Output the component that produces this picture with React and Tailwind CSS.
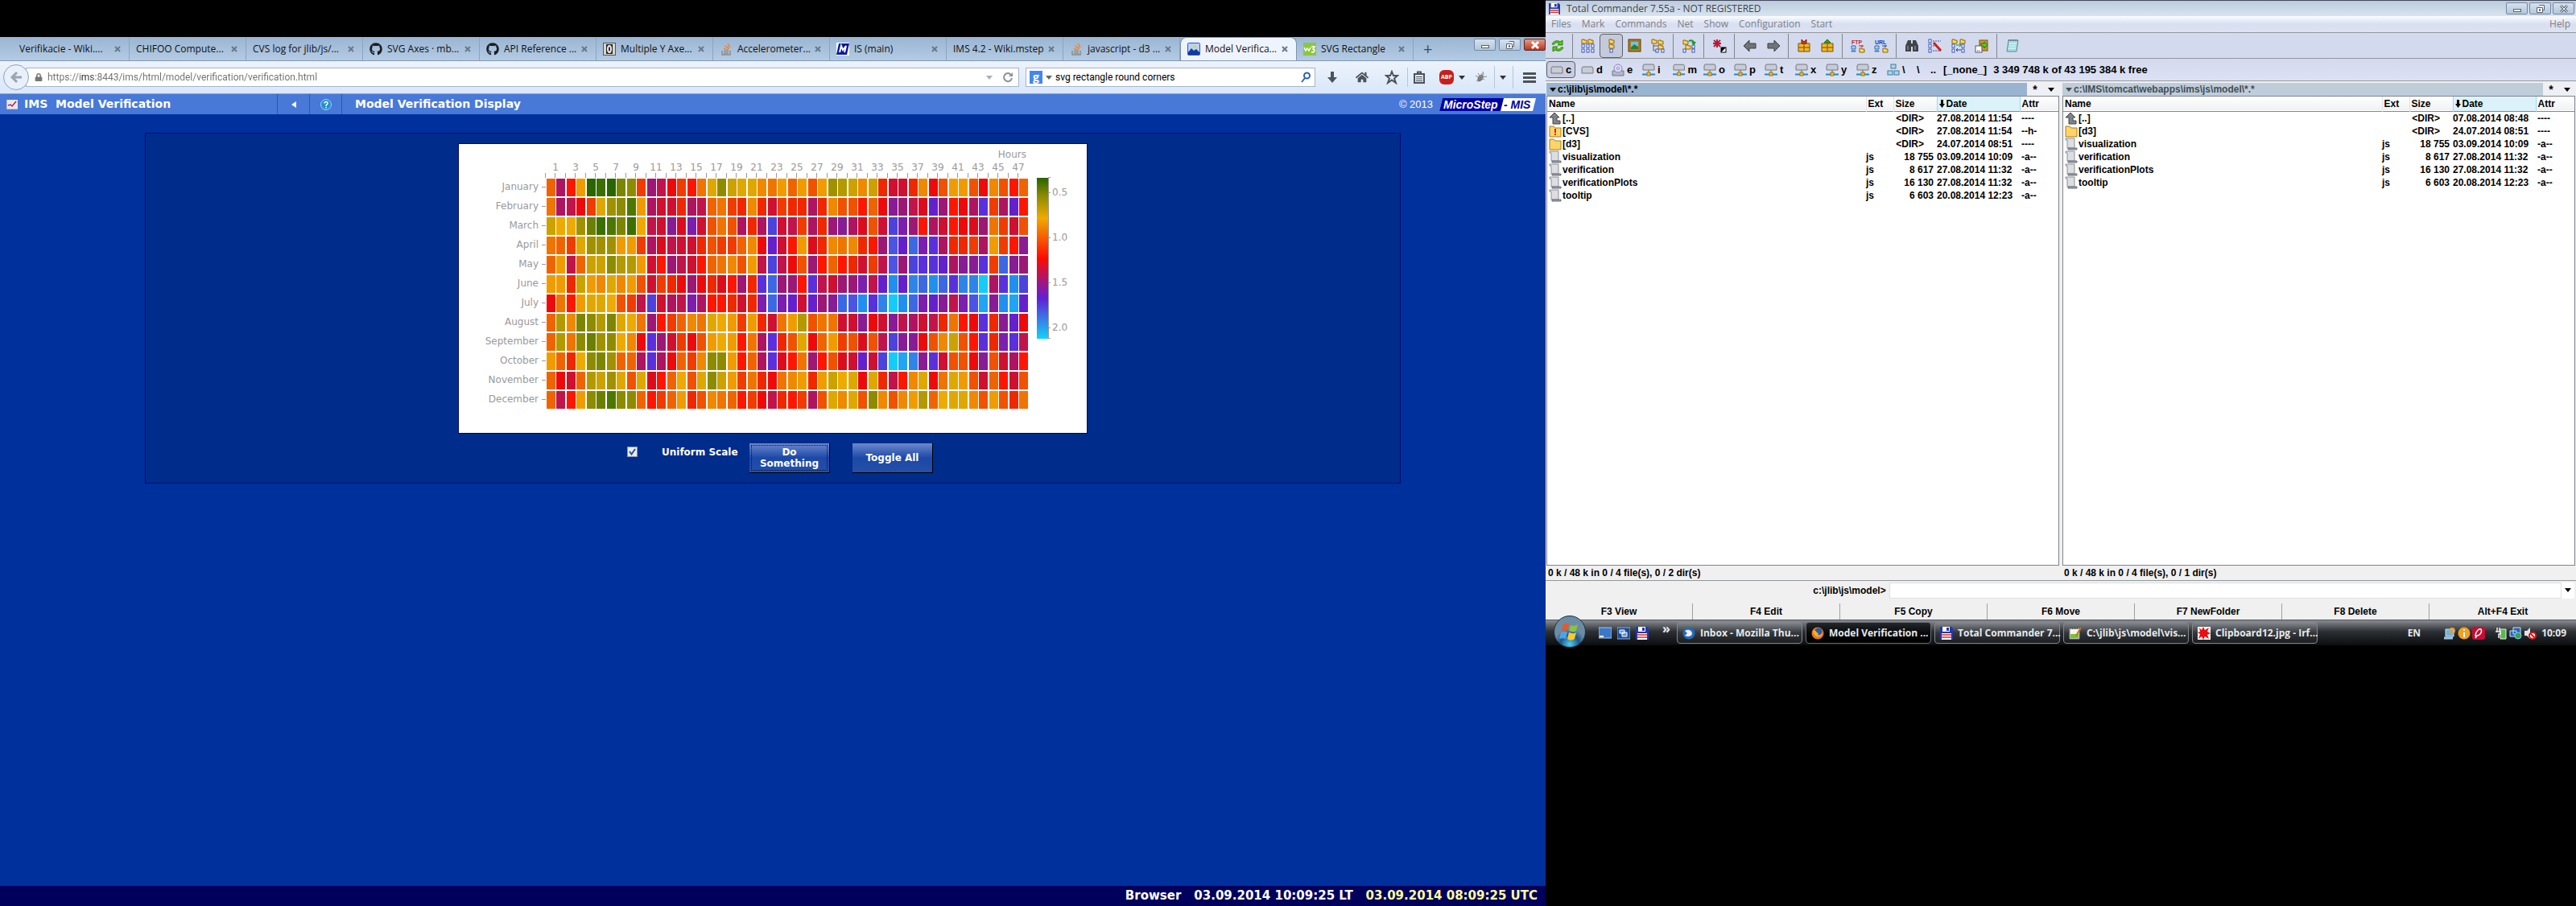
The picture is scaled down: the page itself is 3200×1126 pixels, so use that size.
import React from "react";
import { FaGithub, FaHome, FaLock } from "react-icons/fa";

const UI = "font-['Open_Sans','Noto_Sans',sans-serif]";
const VER = "font-['DejaVu_Sans',sans-serif]";
const TC = "font-['Liberation_Sans',sans-serif]";

/* ---------- heat map data: one letter per hour, darkest green to cyan ---------- */
const PALETTE = {
  0: "#2a6600", 1: "#3b7000", 2: "#4c7700", 3: "#6b8000", 4: "#7c8600", 5: "#8d8c00",
  6: "#a09100", 7: "#b39a00", 8: "#cba200", 9: "#dfa800", a: "#eeaa00", b: "#f09c00",
  c: "#f08800", d: "#f07400", e: "#f06400", f: "#f05200", g: "#f03c00", h: "#f02800",
  i: "#ff1600", j: "#ee0a0a", k: "#dc0c1c", l: "#d01030", m: "#c0144a", n: "#ae1460",
  o: "#9c1874", p: "#881c94", q: "#7c1eae", r: "#6420cc", s: "#5a30dc", t: "#4c42dc",
  u: "#4c54e4", v: "#3c68e4", w: "#2f84ea", x: "#2090f0", y: "#20a4f4", z: "#14ccf8",
};

const MONTHS = [
  ["January", "enib01045gomjgid95899cdbebfb678c8hllhcjfbbfjcfie"],
  ["February", "dnmjg9652bnllhnmedghchlghhnhcffiejpomkroijnsgnri"],
  ["March", "8aa631241amlpkqlfdfnhntlmgnhopnkfltqoinlijkodglf"],
  ["April", "deg9666bbgnkmllhfggecjrlibkhcdchiourvqsnhhgnbgip"],
  ["May", "ebme88577bliomliedcfbmtmjfoieihlgmuotssrnppsgvpo"],
  ["June", "bbh8bc9cbflghjojhkiohsvooismlooqmrxrwvxvswwznsxt"],
  ["July", "jdib99afgmtlnmqniihlhqvqrlropvuxswzxvqrpmquypxyr"],
  ["August", "e7c45749adoigecd9abgbhldb7fddllpjlpmnlmhdijshprj"],
  ["September", "e7d5365acjsolgjfbabidnshf9jebgfkfmtppjfc8fishqsm"],
  ["October", "beha546eensnjegc55bienskidoifklrltzywpslffjpflni"],
  ["November", "ejle7869f9kieaf958bgdhjdcbhb8a9j9hmic9jd9bfleilf"],
  ["December", "emib53255eigebhfcdeigjmhignf9c9f5cfcb7ea99cfbfhd"],
];

function HeatMap() {
  const cellX = (i) => 109 + Math.floor(i * 12.5);
  return (
    <svg viewBox="0 0 780 359" className={`block w-full ${VER} text-[12px]`} role="img" aria-label="Hourly verification by month">
      <defs>
        <linearGradient id="scale" x1="0" y1="0" x2="0" y2="1">
          <stop offset="0" stopColor="#286400" />
          <stop offset="0.11" stopColor="#8a8a00" />
          <stop offset="0.25" stopColor="#f0aa00" />
          <stop offset="0.5" stopColor="#ff0a00" />
          <stop offset="0.75" stopColor="#6020d8" />
          <stop offset="1" stopColor="#10d4f8" />
        </linearGradient>
      </defs>
      <g fill="#999">
        <text x="705" y="17" textAnchor="end">Hours</text>
        {Array.from({ length: 48 }, (_, i) => (
          <g key={i}>
            <rect x={cellX(i) - 2} y="36" width="1" height="6" />
            {i % 2 === 1 && <text x={cellX(i) - 1} y="33" textAnchor="middle">{i}</text>}
          </g>
        ))}
        {MONTHS.map(([name], r) => (
          <g key={name}>
            <text x="99" y={57 + r * 24} textAnchor="end">{name}</text>
            <rect x="103" y={53 + r * 24} width="5" height="1" />
          </g>
        ))}
      </g>
      {MONTHS.map(([name, hours], r) =>
        hours.split("").map((v, i) => (
          <rect key={name + i} x={cellX(i)} y={43 + r * 24} width="11" height="22" fill={PALETTE[v]} />
        ))
      )}
      <rect x="718" y="42" width="14" height="200" fill="url(#scale)" />
      <path d="M735 41.500H732.500V241.500H735M732 60.500H735M732 116.500H735M732 172.500H735M732 228.500H735" fill="none" stroke="#999" />
      <g fill="#999">
        <text x="737" y="64">0.5</text>
        <text x="737" y="120">1.0</text>
        <text x="737" y="176">1.5</text>
        <text x="737" y="232">2.0</text>
      </g>
    </svg>
  );
}

/* ---------- browser ---------- */
const ZeroIcon = () => (
  <svg viewBox="0 0 16 16" className="size-4 shrink-0"><rect width="16" height="16" fill="#555" /><rect x="1" y="1" width="14" height="14" fill="#d8d4cc" /><rect x="4" y="2" width="8" height="12" fill="#222" /><ellipse cx="8" cy="8" rx="2" ry="4" fill="none" stroke="#eee" strokeWidth="2" /></svg>
);
const MisIcon = () => (
  <svg viewBox="0 0 16 16" className="size-4 shrink-0"><path d="M0 0H16V16H0z" fill="#fff" /><path d="M3 1H16L13 15H0z" fill="#0a1a9c" /><path d="M4 12L6 4L8 9L12 4L10 12" fill="none" stroke="#fff" strokeWidth="2" /></svg>
);
const SceneIcon = () => (
  <svg viewBox="0 0 16 16" className="size-4 shrink-0"><rect x=".5" y=".5" width="15" height="15" rx="1" fill="#b7d3fb" stroke="#2b57b5" /><path d="M1 12L5 7L8 10L11 8L15 12V15H1z" fill="#123c9c" /><circle cx="9" cy="5" r="2" fill="#ffc93a" /></svg>
);
const W3Icon = () => (
  <svg viewBox="0 0 16 16" className="size-4 shrink-0"><rect width="16" height="16" fill="#8cc63f" /><path d="M1 6L3 10L5 7L7 10L9 6M10 5H14L12 8C15 8 15 12 10 12" fill="none" stroke="#fff" strokeWidth="1.500" /></svg>
);
const Git = () => <FaGithub className="size-4 shrink-0 text-[#1b1f23]" />;
const Stack = () => (
  <svg viewBox="0 0 16 16" className="size-4 shrink-0"><path d="M3 10V15H13V10M5 13H11M5 10.500H11" fill="none" stroke="#8c8c8c" strokeWidth="1.500" /><path d="M5 7.500L11 9M6.500 4L12 7.500M10 1L13 6" fill="none" stroke="#e88a3c" strokeWidth="1.500" /></svg>
);

const TABS = [
  ["Verifikacie - Wiki....", null], ["CHIFOO Compute...", null], ["CVS log for jlib/js/...", null],
  ["SVG Axes · mb...", Git], ["API Reference ...", Git], ["Multiple Y Axe...", ZeroIcon],
  ["Accelerometer...", Stack], ["IS (main)", MisIcon], ["IMS 4.2 - Wiki.mstep", null],
  ["javascript - d3 ...", Stack], ["Model Verifica...", SceneIcon], ["SVG Rectangle", W3Icon],
];

function Tab({ label, Icon, active, first }) {
  return (
    <button className={`flex h-full shrink-0 items-center pr-2.5 text-[#111] ${first ? "w-[161px] pl-6" : "w-[145px] pl-2"} ${active ? "rounded-t-lg border border-b-0 border-[#7d93ad] bg-[#eef4fd]" : "border-r border-[#8ca4be]"}`}>
      {Icon && <Icon />}
      <span className={`whitespace-nowrap ${Icon ? "ml-1.5" : ""}`}>{label}</span>
      <svg viewBox="0 0 8 8" className="ml-auto size-2 shrink-0"><path d="M1 1L7 7M7 1L1 7" stroke="#68798c" strokeWidth="2" /></svg>
    </button>
  );
}

function WinButton({ kind, close, label }) {
  return (
    <button aria-label={label} className={`flex h-[15px] w-[27px] items-center justify-center rounded-xs border ${close ? "border-[#5c2a2a] bg-linear-to-b from-[#e09a88] to-[#b8321c] text-white" : "border-[#7488a0] bg-linear-to-b from-[#d5e1ef] to-[#b4c7dc] text-[#55606c]"}`}>
      <svg viewBox="0 0 14 12" className="h-3 w-3.5" fill="#fff" stroke="currentColor">
        {kind === "min" && <rect x="2.500" y="6.500" width="9" height="3" />}
        {kind === "max" && <path d="M5.500 1.500H11.500V7.500H9.500M2.500 4.500H9.500V10.500H2.500zM5.500 6.500H6.500V8.500H5.500z" />}
        {kind === "x" && <path d="M3 2L11 10M11 2L3 10" strokeWidth="3" stroke={close ? "#fff" : "#5c6672"} />}
        {kind === "x" && !close && <path d="M3 2L11 10M11 2L3 10" strokeWidth="1" stroke="#fff" />}
      </svg>
    </button>
  );
}

const Caret = ({ className = "" }) => (
  <svg viewBox="0 0 8 5" className={`h-[5px] w-2 ${className}`}><path d="M0 0H8L4 5z" fill="currentColor" /></svg>
);

function Browser() {
  return (
    <section className="flex min-h-screen min-w-0 flex-[3] flex-col bg-[#00309c]">
      <div className="h-[46px] bg-black" />
      <div className={`flex h-[30px] border-b border-[#8199b4] bg-linear-to-b from-[#9ab5d3] to-[#b4cbe3] text-[12px] ${UI}`}>
        {TABS.map(([label, Icon], i) => <Tab key={label} label={label} Icon={Icon} active={i === 10} first={i === 0} />)}
        <button aria-label="New tab" className="ml-3 text-[20px] leading-7 text-[#3c4a5a]">+</button>
        <div className="ml-auto flex gap-1 pt-0.5">
          <WinButton kind="min" label="Minimize" />
          <WinButton kind="max" label="Restore" />
          <WinButton kind="x" close label="Close" />
        </div>
      </div>
      <div className={`flex h-[41px] items-center border-b border-[#90a4bc] bg-linear-to-b from-[#edf3fc] to-[#d9e7f9] text-[12px] text-[#4c525a] ${UI}`}>
        <button aria-label="Back" className="z-10 ml-1 flex size-8 items-center justify-center rounded-full border border-[#8ea3bd] bg-[#e9f0f9]">
          <svg viewBox="0 0 16 16" className="size-4"><path d="M9 2L3 8L9 14M3 8H15" fill="none" stroke="#9aa5b2" strokeWidth="3" /></svg>
        </button>
        <div className="-ml-1 flex h-6 flex-1 items-center gap-1.5 border border-[#a4b5c9] bg-white pl-2.5">
          <FaLock className="size-2.5 text-[#777]" />
          <input aria-label="Address" readOnly className="min-w-0 flex-1 bg-linear-to-r from-[#707070] from-[42px] via-[#111] via-[42px] to-[#707070] to-[62px] bg-clip-text font-[Roboto,sans-serif] text-[12px] text-transparent outline-none" value="https://ims:8443/ims/html/model/verification/verification.html" />
          <Caret className="text-[#a8b0b8]" />
          <svg viewBox="0 0 14 14" className="mr-1.5 ml-1.5 size-3.5"><path d="M11 4A5 5 0 1 0 12 8" fill="none" stroke="#8a929c" strokeWidth="2" /><path d="M13 1V6H8z" fill="#8a929c" /></svg>
        </div>
        <div className="ml-2 flex h-6 w-[360px] items-center border border-[#a4b5c9] bg-white pl-1">
          <span className="flex size-4 items-center justify-center bg-[#4486f0] text-[14px] leading-4 font-bold text-white">g</span>
          <Caret className="ml-1 text-[#666]" />
          <input aria-label="Search" className="ml-1 min-w-0 flex-1 font-[Roboto,sans-serif] text-[12px] text-black outline-none" defaultValue="svg rectangle round corners" />
          <svg viewBox="0 0 14 14" className="mr-1 size-3.5"><circle cx="8.500" cy="5" r="3.500" fill="none" stroke="#2e62b0" strokeWidth="2" /><path d="M6 8L2 13" stroke="#2e62b0" strokeWidth="2" /></svg>
        </div>
        <div className="flex items-center pl-3.5">
          <button aria-label="Downloads" className="w-9"><svg viewBox="0 0 14 14" className="size-3.5"><path d="M5 0H9V7H13L7 14L1 7H5z" fill="#4c525a" /></svg></button>
          <button aria-label="Home" className="w-9"><FaHome className="size-4" /></button>
          <button aria-label="Bookmark" className="w-7"><svg viewBox="0 0 18 18" className="size-[18px]"><path d="M9 2L11 7L16 7L12 10.500L14 16L9 12.500L4 16L6 10.500L2 7L7 7z" fill="none" stroke="#4c525a" strokeWidth="2" /></svg></button>
          <button aria-label="Bookmarks list" className="flex h-6 w-10 items-center border-l border-[#b8c6d8] pl-1.5"><svg viewBox="0 0 16 16" className="size-4"><path d="M2 4H14V15H2zM6 1.500H10V4H6z" fill="none" stroke="#4c525a" strokeWidth="2" /><path d="M4 7.500H12M4 10H12M4 12.500H12" stroke="#4c525a" /></svg></button>
          <button className="flex w-11 items-center gap-1.5"><span className="flex size-[18px] items-center justify-center rounded-md bg-[#c7201c] text-[7px] font-bold text-white">ABP</span><Caret className="text-[#333]" /></button>
          <button aria-label="Firebug" className="w-6"><svg viewBox="0 0 16 16" className="size-4"><ellipse cx="7" cy="9" rx="3" ry="5" fill="#777" transform="rotate(35 7 9)" /><path d="M1 6L7 9L2 13M9 3L8 8L15 7M10 1L11 5M4 3L7 8M12 11L8 9" stroke="#888" fill="none" /></svg></button>
          <button aria-label="Firebug menu" className="flex h-7 w-6 items-center border-x border-[#b8c6d8] pl-1.5"><Caret className="text-[#333]" /></button>
          <button aria-label="Menu" className="mr-3 ml-3 flex w-4 flex-col gap-0.5"><i className="h-[3px] bg-[#4c525a]" /><i className="h-[3px] bg-[#4c525a]" /><i className="h-[3px] bg-[#4c525a]" /></button>
        </div>
      </div>
      <header className={`flex h-[25px] items-center bg-[#4878d8] text-[14px] font-bold text-white ${VER}`}>
        <div className="flex h-full w-[345px] items-center gap-2 border-r border-[#2c58b8] pl-2">
          <svg viewBox="0 0 14 12" className="h-3 w-3.5"><rect width="14" height="12" fill="#e4e8f0" /><path d="M2 7L5 6L7 8L12 2" fill="none" stroke="#c02030" strokeWidth="1.500" /><path d="M0 0V12H14" fill="none" stroke="#99a" /></svg>
          <h1 className="whitespace-pre">IMS  Model Verification</h1>
        </div>
        <button aria-label="Collapse" className="flex h-full w-10 items-center justify-center border-r border-[#2c58b8]"><svg viewBox="0 0 6 8" className="h-2 w-1.5"><path d="M6 0V8L0 4z" fill="#fff" /></svg></button>
        <button aria-label="Help" className="flex h-full w-10 items-center justify-center border-r border-[#2c58b8]"><svg viewBox="0 0 14 14" className="size-3.5"><circle cx="7" cy="7" r="6.500" fill="#2490d0" stroke="#9cd4f4" /><path d="M5 5.500C5 2.500 9.500 3 9 5.500C8.500 7 7 7 7 9M7 10V11.500" stroke="#fff" strokeWidth="1.500" fill="none" /></svg></button>
        <h2 className="pl-4">Model Verification Display</h2>
        <span className={`ml-auto text-[13px] font-normal ${TC}`}>© 2013</span>
        <svg viewBox="0 0 120 16" className={`mr-3 ml-2 h-4 w-[120px] ${TC} text-[14px] font-bold italic`}>
          <path d="M4 0H120L116 16H0z" fill="#fff" /><path d="M4 0H80L76 16H0z" fill="#0000a0" />
          <text x="5" y="13" fill="#fff">MicroStep</text><text x="80" y="13" fill="#0000a0">- MIS</text>
        </svg>
      </header>
      <main className="mx-[180px] mt-[23px] border border-[#000c70] bg-[#002c8c]">
        <div className="mx-auto mt-[13px] w-full max-w-[780px] bg-white shadow-[0_0_0_1px_#000860]"><HeatMap /></div>
        <div className={`mt-[13px] flex items-start justify-center pb-3 pl-[18px] text-[12px] leading-[14px] font-bold text-white ${VER}`}>
          <label className="flex w-[152px] items-start">
            <input type="checkbox" defaultChecked className="mt-1 size-[13px] appearance-none border border-[#8894a8] bg-[#e8ecf4]" />
            <svg viewBox="0 0 13 13" className="pointer-events-none mt-1 -ml-[13px] size-[13px]"><path d="M3 6L5.500 9.500L10 3" fill="none" stroke="#30508c" strokeWidth="2" /></svg>
            <span className="mt-1 ml-[30px] whitespace-nowrap">Uniform Scale</span>
          </label>
          <button className="h-[37px] w-[100px] border-r border-b border-black bg-linear-to-b from-[#6c88cc] via-[#1c48a8] to-[#2450a8] p-0.5"><span className="flex h-full items-center justify-center border border-dotted border-[#001040]">Do<br />Something</span></button>
          <button className="ml-7 h-[37px] w-[100px] border-r border-b border-black bg-linear-to-b from-[#6c88cc] via-[#1c48a8] to-[#2450a8]">Toggle All</button>
        </div>
      </main>
      <footer className={`mt-auto flex h-[25px] items-center justify-end gap-4 bg-[#00005c] pr-2.5 text-[15px] font-bold text-white ${VER}`}>
        <span>Browser</span><span>03.09.2014 10:09:25 LT</span><span className="text-[#ffff98]">03.09.2014 08:09:25 UTC</span>
      </footer>
    </section>
  );
}

/* ---------- file manager icons ---------- */
const Floppy = ({ className = "size-4 shrink-0" }) => (
  <svg viewBox="0 0 16 16" className={className}><path d="M0 0H14L16 2V16H0z" fill="#2238a8" /><rect x="3" width="9" height="6" fill="#fff" /><rect x="8" y="1" width="3" height="4" fill="#2238a8" /><rect x="2" y="8" width="12" height="8" fill="#fff" /><path d="M2 10H14M2 13H14" stroke="#e02828" strokeWidth="1.500" /></svg>
);
const Folder = ({ x, y }) => <path d={`M${x} ${y}h3v1h3v4h-6z`} fill="#ffd860" stroke="#8c6408" strokeWidth="1" />;
const Doc = ({ x, y }) => <rect x={x} y={y} width="3" height="4" fill="#fff" stroke="#3454b4" />;
const Tool = ({ children }) => <svg viewBox="0 0 18 18" className="size-[18px]">{children}</svg>;
const Gift = ({ children }) => (
  <Tool><path d="M2 6H16V16H2z" fill="#f0b828" stroke="#7c4c08" /><path d="M9 6V16M2 11H16" stroke="#7c4c08" />{children}</Tool>
);
const Pc = ({ x, y }) => <path d={`M${x} ${y}h5v4h-5zM${x} ${y + 6}h5v1h-5z`} fill="#9cd4f0" stroke="#3868b8" />;

const TOOLS = [
  ["Refresh", <Tool><path d="M2 7C4 2 10 2 12 4L15 2V8H9L11 6C8 4 6 5 5 7z" fill="#58c818" stroke="#2c8408" /><path d="M16 11C14 16 8 16 6 14L3 16V10H9L7 12C10 14 12 13 13 11z" fill="#58c818" stroke="#2c8408" /></Tool>],
  null,
  ["Brief", <Tool><Folder x={1} y={1} /><Folder x={9} y={1} />{[7, 13].map((y) => [1, 7, 13].map((x) => <Doc key={x + "-" + y} x={x} y={y} />))}</Tool>],
  ["Full", <Tool><Folder x={6} y={1} /><Folder x={6} y={7} /><Doc x={7} y={13} /></Tool>, true],
  ["Thumbnails", <Tool><rect x="1" y="1" width="15" height="15" fill="#b07c20" stroke="#5c3c08" /><rect x="4" y="4" width="9" height="9" fill="#6cc4e8" /><path d="M4 11L8 7L13 10V13H4z" fill="#208438" /></Tool>],
  ["Tree", <Tool><Folder x={1} y={1} /><Folder x={9} y={2} /><path d="M3 7V15H9M3 9H9" stroke="#557" fill="none" /><Folder x={9} y={8} /><Doc x={6} y={13} /><Doc x={13} y={13} /></Tool>],
  null,
  ["Same in target", <Tool><Folder x={2} y={2} /><Folder x={5} y={8} /><Doc x={2} y={13} /><Doc x={13} y={8} /><Doc x={13} y={13} /><path d="M9 3C13 1 15 3 15 6M13 4L15 7L17 4" stroke="#189828" strokeWidth="2" fill="none" /></Tool>],
  null,
  ["Invert", <Tool><path d="M6 1V11M1 6H11M2 2L10 10M10 2L2 10" stroke="#b81838" strokeWidth="2" /><rect x="11" y="11" width="6" height="6" fill="#fff" stroke="#000" /><path d="M11 11H17L11 17z" /></Tool>],
  null,
  ["Back", <Tool><path d="M8 2L1 9L8 16V12H16V6H8z" fill="#707478" stroke="#3c4044" /></Tool>],
  ["Forward", <Tool><path d="M10 2L17 9L10 16V12H2V6H10z" fill="#707478" stroke="#3c4044" /></Tool>],
  null,
  ["Pack", <Gift><path d="M6 1L9 4L12 1V6H6z" fill="#e03818" stroke="#8c1808" /></Gift>],
  ["Unpack", <Gift><path d="M9 1L13 5H5z" fill="#38a818" stroke="#186808" /></Gift>],
  null,
  ["FTP", <Tool><text x="1" y="7" fontSize="7" fontWeight="bold" fill="#b82838">FTP</text><Pc x={1} y={9} /><Folder x={11} y={12} /><path d="M10 9H16M14 8V11" stroke="#c02020" /></Tool>],
  ["URL", <Tool><text x="1" y="7" fontSize="7" fontWeight="bold" fill="#1838b0">URL</text><Pc x={1} y={9} /><Folder x={11} y={12} /><path d="M10 9H16M14 8V11" stroke="#2040b0" /></Tool>],
  null,
  ["Search", <Tool><path d="M4 2H8V16H1V9zM10 2H14L17 9V16H10zM8 6H10V10H8z" fill="#404448" /><path d="M4 9V14M13 9V14" stroke="#aab" /></Tool>],
  ["Multi-rename", <Tool><Doc x={1} y={1} /><Doc x={1} y={7} /><Doc x={1} y={13} /><path d="M6 3H16M6 9H8M6 15H16" stroke="#3454b4" strokeDasharray="2 1" /><path d="M7 5L16 15" stroke="#d02018" strokeWidth="3" /></Tool>],
  ["Synchronize", <Tool><Folder x={1} y={1} /><Folder x={11} y={1} /><Doc x={1} y={7} /><Doc x={13} y={7} /><Doc x={1} y={13} /><Doc x={13} y={13} /><path d="M6 8H12M10 6L12 8L10 10" stroke="#189828" fill="none" /><path d="M6 14H12M8 12L6 14L8 16" stroke="#2040b0" fill="none" /></Tool>],
  ["Copy names", <Tool><rect x="6" y="2" width="10" height="13" fill="#c89838" stroke="#7c5408" /><path d="M8 6H12V4L16 8L12 12V10H8z" fill="#68c020" stroke="#287808" /><rect x="1" y="9" width="8" height="8" fill="#fff" stroke="#557" /><path d="M3 15H7" stroke="#223" strokeDasharray="1 1" /></Tool>],
  null,
  ["Notepad", <Tool><path d="M4 2H16L14 16H2z" fill="#a4dcdc" stroke="#5c8c94" /><path d="M5 6H14M5 9H13M4 12H13" stroke="#e4ffff" /><path d="M4 2H16" stroke="#667" strokeWidth="2" strokeDasharray="1 1" /></Tool>],
];

const Drive = ({ kind }) => (
  <svg viewBox="0 0 16 16" className="size-4">
    {kind === "cd" && <><path d="M1 9H15V15H1z" fill="#b4b8c4" stroke="#747884" /><circle cx="8" cy="6" r="5" fill="#dcd8f8" stroke="#8884c4" /><circle cx="8" cy="6" r="1.500" fill="#fff" stroke="#8884c4" /></>}
    {kind === "hd" && <path d="M2 4H14L15 6V12H1V6z" fill="#c8ccd4" stroke="#747884" />}
    {kind === "net" && <><path d="M2 1H14L15 3V8H1V3z" fill="#c8ccd4" stroke="#747884" /><path d="M0 13.500H16" stroke="#2088c8" strokeWidth="2" /><path d="M8 8V12" stroke="#667" /><rect x="6" y="11" width="4" height="4" fill="#f0c030" stroke="#a07808" /></>}
    {kind === "pcs" && <><rect x="5" y="1" width="6" height="5" fill="#a4d8f0" stroke="#447898" /><rect x="1" y="9" width="6" height="5" fill="#a4d8f0" stroke="#447898" /><rect x="9" y="9" width="6" height="5" fill="#a4d8f0" stroke="#447898" /></>}
  </svg>
);
const DRIVES = [["c", "hd"], ["d", "hd"], ["e", "cd"], ["i", "net"], ["m", "net"], ["o", "net"], ["p", "net"], ["t", "net"], ["x", "net"], ["y", "net"], ["z", "net"], ["\\", "pcs"]];

const FileIcon = ({ kind }) => (
  <svg viewBox="0 0 16 16" className="size-4 shrink-0">
    {kind === "up" && <path d="M7 1L13 7H10V11H14V15H5V7H1z" fill="#808488" stroke="#44484c" />}
    {(kind === "dir" || kind === "hidden") && <path d="M1 2H6L8 4H15V15H1z" fill="#fcd468" stroke="#a87c20" />}
    {kind === "hidden" && <path d="M8 5V10M8 11V13" stroke="#d82018" strokeWidth="2" />}
    {kind === "js" && <><path d="M1 1H12V13H3V3H1z" fill="#dcdee2" stroke="#8c9096" /><path d="M4 13H15V15H4z" fill="#a4a8ae" stroke="#6c7076" /></>}
  </svg>
);

const FILES = [
  ["js", "visualization", "js", "18 755", "03.09.2014 10:09", "-a--"],
  ["js", "verification", "js", "8 617", "27.08.2014 11:32", "-a--"],
  ["js", "verificationPlots", "js", "16 130", "27.08.2014 11:32", "-a--"],
  ["js", "tooltip", "js", "6 603", "20.08.2014 12:23", "-a--"],
];
const LEFT = [
  ["up", "[..]", "", "<DIR>", "27.08.2014 11:54", "----"],
  ["hidden", "[CVS]", "", "<DIR>", "27.08.2014 11:54", "--h-"],
  ["dir", "[d3]", "", "<DIR>", "24.07.2014 08:51", "----"],
  ...FILES,
];
const RIGHT = [
  ["up", "[..]", "", "<DIR>", "07.08.2014 08:48", "----"],
  ["dir", "[d3]", "", "<DIR>", "24.07.2014 08:51", "----"],
  ...FILES,
];

function Pane({ path, active, rows, status }) {
  return (
    <div className="flex min-w-0 flex-1 flex-col">
      <div className="flex h-4 items-center bg-[#eef0f4] leading-4">
        <button className={`flex h-full min-w-0 flex-1 items-center gap-0.5 pl-1 ${active ? "bg-[#99b4d1] text-black" : "bg-[#bfcddb] text-[#434e54]"}`}><Caret />{path}</button>
        <button aria-label="Favourites" className="w-5 text-[14px] leading-4">*</button>
        <button aria-label="History" className="flex w-5 justify-center"><Caret /></button>
      </div>
      <div className="h-[584px] border border-[#80848c] bg-white">
        <table className="w-full table-fixed border-collapse">
          <colgroup><col /><col className="w-[34px]" /><col className="w-[54px]" /><col className="w-[103px]" /><col className="w-12" /></colgroup>
          <thead>
            <tr className="h-[18px] border-b border-[#84888c] bg-linear-to-b from-white to-[#f0f1f2] text-left leading-4">
              <th className="pl-0.5">Name</th>
              <th className="border-l border-[#e0e2e6] pl-0.5">Ext</th>
              <th className="border-l border-[#e0e2e6] pl-0.5">Size</th>
              <th className="border-x border-[#96d9f9] bg-[#dcf2fb]"><span className="flex items-center gap-0.5 pl-0.5"><svg viewBox="0 0 7 10" className="h-2.5 w-[7px]"><path d="M2 0H5V5H7L3.500 10L0 5H2z" /></svg>Date</span></th>
              <th className="pl-0.5">Attr</th>
            </tr>
          </thead>
          <tbody>
            {rows.map(([kind, name, ext, size, date, attr]) => (
              <tr key={name} className="h-4 leading-4">
                <td><span className="flex items-center gap-px pl-0.5"><FileIcon kind={kind} />{name}</span></td>
                <td>{ext}</td>
                <td className={`text-right ${ext ? "pr-1" : "pr-4"}`}>{size}</td>
                <td className="whitespace-nowrap">{date}</td>
                <td className="pl-0.5">{attr}</td>
              </tr>
            ))}
          </tbody>
        </table>
      </div>
      <div className="flex h-[18px] items-center pl-0.5">{status}</div>
    </div>
  );
}

const Sep = () => <span className="mx-1 h-[30px] w-px bg-[#80848c]" />;

const FirefoxIcon = () => <svg viewBox="0 0 16 16" className="size-4 shrink-0"><circle cx="8" cy="8" r="7.500" fill="#e87818" /><circle cx="9" cy="6" r="4.500" fill="#2858b0" /><path d="M2 5C6 3 6 8 9 8C6 12 13 11 13 7C15 14 3 15 2 5" fill="#f8b020" /></svg>;
const BirdIcon = () => <svg viewBox="0 0 16 16" className="size-4 shrink-0"><circle cx="8" cy="8" r="7.500" fill="#2868b8" /><path d="M3 5C8 2 12 5 12 9C11 12 7 13 3 11L6 8z" fill="#e8f0f8" /></svg>;
const NoteIcon = () => <svg viewBox="0 0 16 16" className="size-4 shrink-0"><path d="M1 2H13V15H1z" fill="#f4f4e8" stroke="#888" /><path d="M2 9H12V14H2z" fill="#74c42c" /><path d="M15 1L9 11" stroke="#c07818" strokeWidth="2" /><path d="M2 2H12" stroke="#444" strokeDasharray="1 1" strokeWidth="2" /></svg>;
const IrfanIcon = () => <svg viewBox="0 0 16 16" className="size-4 shrink-0"><rect width="16" height="16" fill="#fff" /><path d="M2 1L5 4L7 0L9 4L14 1L12 6L16 8L12 10L14 15L9 12L7 16L5 12L1 15L3 9L0 7L3 6z" fill="#e81010" /></svg>;

const TASKS = [
  ["Inbox - Mozilla Thu...", BirdIcon], ["Model Verification ...", FirefoxIcon], ["Total Commander 7...", Floppy],
  ["C:\\jlib\\js\\model\\vis...", NoteIcon], ["Clipboard12.jpg - Irf...", IrfanIcon],
];

function Taskbar() {
  return (
    <div className={`flex h-8 items-center border-t border-[#50545a] bg-linear-to-b from-[#8a8e92] via-[#2c3034] via-45% to-[#0c0e10] text-[12px] text-[#e8eaec] ${UI}`}>
      <button aria-label="Start" className="-mt-1 ml-2.5 size-10 shrink-0">
        <svg viewBox="0 0 40 40" className="size-10"><defs><radialGradient id="orb" cy="0.900"><stop offset="0" stopColor="#50d0f0" /><stop offset="0.600" stopColor="#1c5888" /><stop offset="1" stopColor="#6c8ca4" /></radialGradient></defs>
          <circle cx="20" cy="20" r="19.500" fill="url(#orb)" stroke="#1c3040" />
          <path d="M12 11C15 9 17 10 19 11L17 19C15 18 13 18 10 19z" fill="#e8582c" /><path d="M21 12C24 13 27 13 30 11L28 19C25 21 22 20 19 19z" fill="#88c440" />
          <path d="M9 21C12 19 15 20 17 21L15 29C13 28 10 28 7 29z" fill="#4ca4e8" /><path d="M19 21C22 22 25 23 28 21L26 29C23 31 20 31 17 29z" fill="#fcc82c" /></svg>
      </button>
      <div className="ml-4 flex w-[97px] shrink-0 items-center gap-[7px]">
        <svg viewBox="0 0 16 16" className="size-4"><rect y="1" width="16" height="13" fill="#3c78c8" stroke="#a8c8f0" /><path d="M1 12H6" stroke="#fff" strokeWidth="2" /></svg>
        <svg viewBox="0 0 16 16" className="size-4"><rect y="1" width="16" height="14" fill="#1c4c94" stroke="#88b0e0" /><path d="M3 4H9V8H3zM6 7H12V12H6z" fill="#5c94d8" stroke="#fff" /></svg>
        <Floppy />
        <span className="-mt-3 ml-2.5 text-[16px] leading-4">»</span>
      </div>
      <div className="flex h-[27px] min-w-0 flex-1 gap-1">
        {TASKS.map(([label, Icon], i) => (
          <button key={label} className={`flex h-full min-w-0 max-w-[156px] flex-1 items-center gap-1.5 rounded-sm border pl-1.5 text-left whitespace-nowrap ${i === 1 ? "border-[#686c70] bg-linear-to-b from-[#24282c] to-black" : "border-[#84888c] bg-linear-to-b from-[#84888c] via-[#34383c] to-[#1c1e20]"}`}><Icon />{label}</button>
        ))}
      </div>
      <span className="mr-7 ml-2">EN</span>
      <div className="flex gap-0.5">
        <svg viewBox="0 0 16 16" className="size-4"><path d="M3 3H13V12H3z" fill="#6cb4e8" stroke="#c8e4f8" /><circle cx="11" cy="5" r="3" fill="none" stroke="#f0a020" strokeWidth="2" /><path d="M1 14H12" stroke="#a8c8e0" strokeWidth="3" /></svg>
        <svg viewBox="0 0 16 16" className="size-4"><circle cx="8" cy="8" r="7.500" fill="#f4a020" /><path d="M8 3V5M8 7V13" stroke="#fff" strokeWidth="2" /></svg>
        <svg viewBox="0 0 16 16" className="size-4"><rect width="16" height="16" rx="3" fill="#c80c30" /><path d="M4 12C4 6 8 2 11 3C13 7 9 11 6 11L4 14" fill="none" stroke="#fff" strokeWidth="1.500" /></svg>
      </div>
      <div className="ml-3 flex gap-0.5">
        <svg viewBox="0 0 16 16" className="size-4"><path d="M7 3H14V15H7z" fill="#58b848" stroke="#e8f0e8" /><path d="M3 1V6M6 1V6M1 6H7V9H5V14" stroke="#f0f0f0" strokeWidth="1.500" fill="none" /></svg>
        <svg viewBox="0 0 16 16" className="size-4"><path d="M5 1H14V9H5zM1 5H9V12H1z" fill="#2464b8" stroke="#d0e4f4" /><circle cx="11" cy="11" r="4" fill="#38a050" stroke="#80c8f0" /></svg>
        <svg viewBox="0 0 16 16" className="size-4"><path d="M1 5H4L8 1V15L4 11H1z" fill="#e0e4e8" /><circle cx="11" cy="11" r="4" fill="#fff" stroke="#d81818" strokeWidth="2" /><path d="M8 8L14 14" stroke="#d81818" strokeWidth="2" /></svg>
      </div>
      <span className="mr-3 ml-1.5">10:09</span>
    </div>
  );
}

function Commander() {
  return (
    <section className={`flex min-w-0 flex-[2] flex-col self-start bg-[#f0f0f0] text-[12px] font-bold text-black ${TC}`}>
      <div className={`flex h-5 items-center border-t border-[#44485c] bg-linear-to-b from-[#bccbdc] to-[#d8e4f0] pl-1 text-[12px] font-normal text-[#3c444c] ${UI}`}>
        <Floppy className="size-3.5" />
        <span className="ml-2">Total Commander 7.55a - NOT REGISTERED</span>
        <div className="ml-auto flex gap-0.5 pr-0.5">
          <WinButton kind="min" label="Minimize window" /><WinButton kind="max" label="Restore window" /><WinButton kind="x" label="Close window" />
        </div>
      </div>
      <nav className={`flex h-[21px] items-center gap-[13px] border-b border-[#94989c] bg-linear-to-b from-[#fcfcff] via-[#d8dff0] to-[#dde3f3] px-[7px] text-[12px] font-normal text-[#7c8088] ${UI}`}>
        {["Files", "Mark", "Commands", "Net", "Show", "Configuration", "Start"].map((m) => <button key={m}>{m}</button>)}
        <button className="ml-auto">Help</button>
      </nav>
      <div className="flex h-8 items-center border-b border-[#94989c] bg-[#d4daed]">
        {TOOLS.map((t, i) => t === null ? <Sep key={i} /> : (
          <button key={i} aria-label={t[0]} className={`flex h-[30px] w-[29px] items-center justify-center rounded-sm ${t[2] ? "border border-[#5c6068] bg-[#c4cadc]" : ""}`}>{t[1]}</button>
        ))}
      </div>
      <div className="flex h-7 items-center border-b border-[#94989c] bg-linear-to-b from-[#d4daed] to-[#dce2f4] pl-px text-[13px]">
        {DRIVES.map(([d, kind], i) => (
          <button key={i} className={`mr-0.5 flex h-[21px] w-9 items-center gap-[3px] rounded-sm border pl-1 ${i === 0 ? "border-[#5c6068] bg-[#c8cee0]" : "border-transparent"}`}><Drive kind={kind} />{d}</button>
        ))}
        <button className="ml-1 w-[17px] text-left">\</button>
        <button className="w-4 text-left">..</button>
        <button className="mr-2">[_none_]</button>
        <span>3 349 748 k of 43 195 384 k free</span>
      </div>
      <div className="flex gap-1 border-b border-[#94989c] px-px pt-0.5">
        <Pane path="c:\jlib\js\model\*.*" active rows={LEFT} status="0 k / 48 k in 0 / 4 file(s), 0 / 2 dir(s)" />
        <Pane path="c:\IMS\tomcat\webapps\ims\js\model\*.*" rows={RIGHT} status="0 k / 48 k in 0 / 4 file(s), 0 / 1 dir(s)" />
      </div>
      <div className="flex h-[23px] items-center">
        <label htmlFor="cmd" className="w-1/3 pr-1 text-right">c:\jlib\js\model&gt;</label>
        <input id="cmd" className="h-5 min-w-0 flex-1 border border-[#dcdfe4] bg-white outline-none" />
        <button aria-label="Command history" className="mr-0.5 flex h-5 w-4 items-center justify-center bg-white"><Caret /></button>
      </div>
      <div className="flex h-[25px] items-center pt-1">
        {["F3 View", "F4 Edit", "F5 Copy", "F6 Move", "F7 NewFolder", "F8 Delete", "Alt+F4 Exit"].map((k) => (
          <button key={k} className="h-5 flex-1 border-r border-[#a0a0a0] last:border-0">{k}</button>
        ))}
      </div>
      <Taskbar />
    </section>
  );
}

export default function App() {
  return (
    <div className="flex min-h-screen bg-black">
      <Browser />
      <Commander />
    </div>
  );
}
